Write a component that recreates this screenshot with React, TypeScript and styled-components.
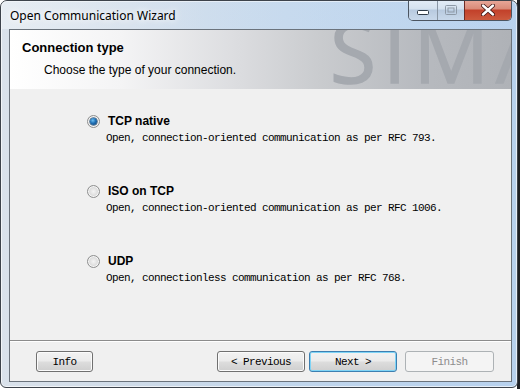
import styled, { createGlobalStyle } from 'styled-components';

const GlobalStyle = createGlobalStyle`
  html, body {
    margin: 0;
    padding: 0;
    background: linear-gradient(to right, #ffffff 0, #ffffff 517px, #1e2024 517px, #1e2024 100%);
  }
  body {
    width: 520px;
    height: 389px;
    overflow: hidden;
    font-family: "Liberation Sans", Arial, sans-serif;
  }
`;

const OPTIONS = [
  {
    id: 'tcp',
    label: 'TCP native',
    desc: 'Open, connection-oriented communication as per RFC 793.',
    checked: true,
  },
  {
    id: 'iso',
    label: 'ISO on TCP',
    desc: 'Open, connection-oriented communication as per RFC 1006.',
    checked: false,
  },
  {
    id: 'udp',
    label: 'UDP',
    desc: 'Open, connectionless communication as per RFC 768.',
    checked: false,
  },
];

const MinimizeGlyph = () => (
  <svg width='12' height='6' viewBox='0 0 12 6'>
    <rect x='0.5' y='0.5' width='11' height='4' rx='1' fill='#fff' stroke='#2f3a46' />
  </svg>
);

const MaximizeGlyph = () => (
  <svg width='12' height='10' viewBox='0 0 12 10'>
    <rect x='0.5' y='0.5' width='11' height='9' rx='1' fill='none' stroke='#8d99a6' />
    <rect x='3' y='3' width='6' height='4' fill='none' stroke='#8d99a6' />
  </svg>
);

const CloseGlyph = () => (
  <svg width='14' height='12' viewBox='0 0 14 12'>
    <path
      d='M2 1.5 L12 10.5 M12 1.5 L2 10.5'
      stroke='#3c1210'
      strokeWidth='4'
      strokeLinecap='round'
    />
    <path
      d='M2 1.5 L12 10.5 M12 1.5 L2 10.5'
      stroke='#ffffff'
      strokeWidth='2.4'
      strokeLinecap='round'
    />
  </svg>
);

export default function App() {
  return (
    <>
      <GlobalStyle />
      <StyledWindow>
        <StyledTitleBar>
          <StyledTitle>Open Communication Wizard</StyledTitle>
          <StyledCaption>
            <StyledCaptionButton $width={28}>
              <MinimizeGlyph />
            </StyledCaptionButton>
            <StyledCaptionButton $width={27}>
              <MaximizeGlyph />
            </StyledCaptionButton>
            <StyledCaptionButton $width={47} $close>
              <CloseGlyph />
            </StyledCaptionButton>
          </StyledCaption>
        </StyledTitleBar>

        <StyledClient>
          <StyledHeader>
            <StyledWatermark aria-hidden>SIMA</StyledWatermark>
            <StyledHeading>Connection type</StyledHeading>
            <StyledSubheading>Choose the type of your connection.</StyledSubheading>
          </StyledHeader>

          <StyledBody>
            {OPTIONS.map((opt) => (
              <StyledOption key={opt.id}>
                <StyledOptionRow>
                  <StyledRadio $checked={opt.checked} />
                  <StyledOptionLabel>{opt.label}</StyledOptionLabel>
                </StyledOptionRow>
                <StyledOptionDesc>{opt.desc}</StyledOptionDesc>
              </StyledOption>
            ))}
          </StyledBody>

          <StyledSeparator />

          <StyledFooter>
            <StyledButton $width={57}>Info</StyledButton>
            <StyledNavButtons>
              <StyledButton $width={88}>&lt; Previous</StyledButton>
              <StyledButton $width={88} $default>
                Next &gt;
              </StyledButton>
              <StyledButton $width={89} $disabled>
                Finish
              </StyledButton>
            </StyledNavButtons>
          </StyledFooter>
        </StyledClient>
      </StyledWindow>
    </>
  );
}

const StyledWindow = styled.div`
  width: 518px;
  height: 388px;
  box-sizing: border-box;
  display: flex;
  flex-direction: column;
  border: 1px solid #3d434b;
  border-radius: 7px 7px 6px 6px;
  background: linear-gradient(
    to right,
    #dae2eb 0%,
    #cfdbe8 25%,
    #c1d6ec 55%,
    #b7d1ee 100%
  );
  box-shadow: inset 0 0 0 1px rgba(255, 255, 255, 0.65);
  overflow: hidden;
`;

const StyledTitleBar = styled.div`
  height: 28px;
  flex-shrink: 0;
  display: flex;
  align-items: center;
  padding: 0 5px 0 9px;
  background: linear-gradient(
    to right,
    rgba(240, 244, 248, 0.6) 0%,
    rgba(220, 232, 244, 0.3) 40%,
    rgba(190, 214, 240, 0.2) 100%
  );
`;

const StyledTitle = styled.div`
  font-family: "Noto Sans", "Open Sans", sans-serif;
  font-size: 12px;
  color: #000;
  text-shadow: 0 0 6px #fff, 0 0 10px #fff;
  margin-top: 1px;
`;

const StyledCaption = styled.div`
  margin-left: auto;
  align-self: flex-start;
  margin-top: -1px;
  display: flex;
  height: 20px;
  border: 1px solid #4c5561;
  border-top: none;
  border-radius: 0 0 5px 5px;
  overflow: hidden;
`;

const StyledCaptionButton = styled.div<{ $width: number; $close?: boolean }>`
  width: ${({ $width }) => $width}px;
  display: flex;
  align-items: center;
  justify-content: center;
  box-sizing: border-box;
  border-left: ${({ $close }) => ($close ? '1px solid #6e2a24' : '1px solid #8a97a5')};
  background: ${({ $close }) =>
    $close
      ? 'linear-gradient(#e9a99b 0%, #d98a78 45%, #c2402a 50%, #cc5a3e 100%)'
      : 'linear-gradient(#e3ecf6 0%, #d4e1ee 45%, #b8cadf 50%, #c8d8ea 100%)'};

  &:first-child {
    border-left: none;
    padding-top: 5px;
  }
`;

const StyledClient = styled.div`
  flex: 1;
  margin: 0 5px 5px 8px;
  border: 1px solid #6b737c;
  background: #f0f0f0;
  display: flex;
  flex-direction: column;
  overflow: hidden;
`;

const StyledHeader = styled.div`
  position: relative;
  height: 59px;
  flex-shrink: 0;
  box-sizing: border-box;
  padding: 10px 12px 0;
  overflow: hidden;
  background: linear-gradient(
    to right,
    #ffffff 0%,
    #f4f4f5 22%,
    #dcdde0 45%,
    #c9cbce 62%,
    #b7babf 82%,
    #afb2b7 100%
  );
`;

const StyledWatermark = styled.span`
  position: absolute;
  left: 320px;
  top: -21px;
  font-family: "Open Sans", "DejaVu Sans", sans-serif;
  font-size: 84px;
  line-height: 84px;
  font-weight: 400;
  letter-spacing: 7px;
  color: #a5a9af;
  white-space: nowrap;
  pointer-events: none;
  -webkit-text-stroke: 1.5px #a5a9af;
`;

const StyledHeading = styled.div`
  position: relative;
  font-family: "Liberation Sans", Arial, sans-serif;
  font-size: 13px;
  font-weight: bold;
  line-height: 16px;
  color: #000;
`;

const StyledSubheading = styled.div`
  position: relative;
  margin: 7px 0 0 22px;
  font-family: "Liberation Sans", Arial, sans-serif;
  font-size: 12px;
  line-height: 14px;
  color: #000;
`;

const StyledBody = styled.div`
  height: 251px;
  flex-shrink: 0;
  box-sizing: border-box;
  padding: 24px 0 0 77px;
  display: flex;
  flex-direction: column;
  gap: 38px;
`;

const StyledOption = styled.div`
  display: flex;
  flex-direction: column;
  gap: 2px;
`;

const StyledOptionRow = styled.div`
  display: flex;
  align-items: center;
  gap: 8px;
  height: 16px;
`;

const StyledRadio = styled.span<{ $checked: boolean }>`
  position: relative;
  width: 13px;
  height: 13px;
  box-sizing: border-box;
  border-radius: 50%;
  border: 1px solid #8e8f8f;
  background: radial-gradient(circle at 50% 50%, #f4f4f4 0%, #dcdcdc 55%, #c9c9c9 100%);
  box-shadow: inset 0 0 0 1px #f6f6f6;

  &::after {
    content: '';
    display: ${({ $checked }) => ($checked ? 'block' : 'none')};
    position: absolute;
    left: 2px;
    top: 2px;
    width: 7px;
    height: 7px;
    border-radius: 50%;
    background: radial-gradient(circle at 40% 35%, #6cc0f2 0%, #1f6fb5 45%, #0f3f6e 100%);
    box-shadow: 0 0 0 0.5px #123f66;
  }
`;

const StyledOptionLabel = styled.span`
  font-family: "Liberation Sans", Arial, sans-serif;
  font-size: 12px;
  font-weight: bold;
  color: #000;
`;

const StyledOptionDesc = styled.div`
  margin-left: 19px;
  font-family: "Liberation Mono", "DejaVu Sans Mono", monospace;
  font-size: 11px;
  letter-spacing: -0.6px;
  line-height: 14px;
  color: #000;
  white-space: nowrap;
`;

const StyledSeparator = styled.div`
  height: 1px;
  flex-shrink: 0;
  background: #8c8c8c;
  border-bottom: 1px solid #ffffff;
`;

const StyledFooter = styled.div`
  flex: 1;
  display: flex;
  align-items: flex-start;
  padding: 9px 17px 0 26px;
`;

const StyledNavButtons = styled.div`
  margin-left: auto;
  display: flex;
  gap: 4px;

  & > :last-child {
    margin-left: 4px;
  }
`;

const StyledButton = styled.div<{ $width: number; $default?: boolean; $disabled?: boolean }>`
  width: ${({ $width }) => $width}px;
  height: 21px;
  box-sizing: border-box;
  display: flex;
  align-items: center;
  justify-content: center;
  border-radius: 3px;
  font-family: "Liberation Mono", "DejaVu Sans Mono", monospace;
  font-size: 11px;
  letter-spacing: -0.6px;
  color: ${({ $disabled }) => ($disabled ? '#8d8d8d' : '#000')};
  border: 1px solid
    ${({ $default, $disabled }) => ($disabled ? '#adb2b5' : $default ? '#3c7fb1' : '#707070')};
  background: ${({ $disabled }) =>
    $disabled
      ? '#f4f4f4'
      : 'linear-gradient(#f2f2f2 0%, #ebebeb 48%, #dddddd 52%, #cfcfcf 100%)'};
  box-shadow: ${({ $default, $disabled }) =>
    $disabled ? 'none' : $default ? 'inset 0 0 0 1px #7fd4f6' : 'inset 0 0 0 1px #fbfbfb'};
`;
